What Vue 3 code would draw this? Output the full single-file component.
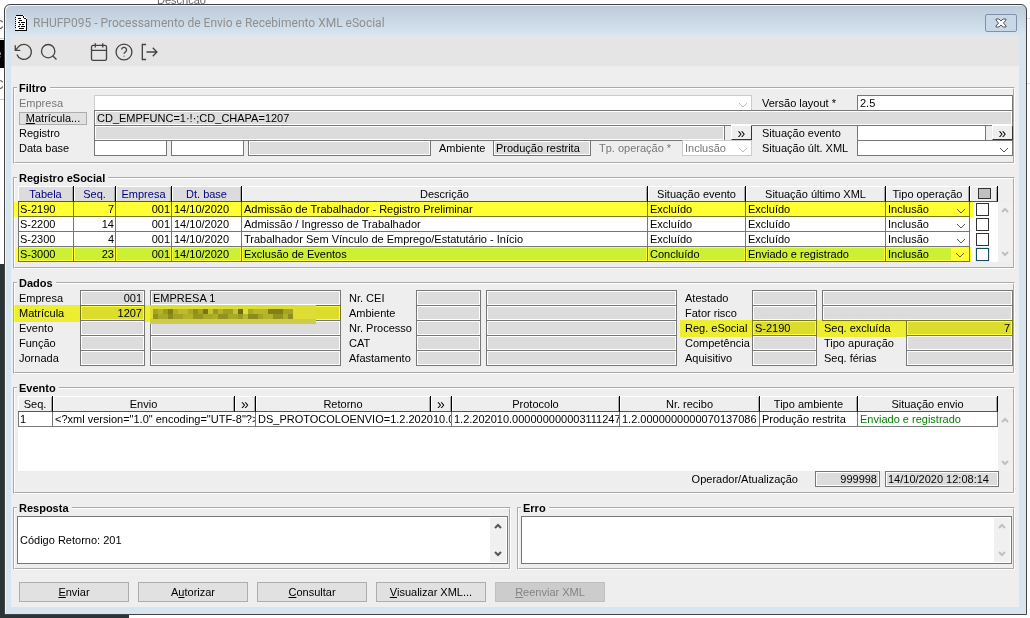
<script setup>
import { ref } from 'vue';

const registros = ref([
  { tabela: 'S-2190', seq: 7, descricao: 'Admissão de Trabalhador - Registro Preliminar', evento: 'Excluído', xml: 'Excluído', marca: 'marked' },
  { tabela: 'S-2200', seq: 14, descricao: 'Admissão / Ingresso de Trabalhador', evento: 'Excluído', xml: 'Excluído', marca: '' },
  { tabela: 'S-2300', seq: 4, descricao: 'Trabalhador Sem Vínculo de Emprego/Estatutário - Início', evento: 'Excluído', xml: 'Excluído', marca: '' },
  { tabela: 'S-3000', seq: 23, descricao: 'Exclusão de Eventos', evento: 'Concluído', xml: 'Enviado e registrado', marca: 'marked current' },
]);

const dados = [
  [
    { label: 'Empresa', codigo: '001', nome: 'EMPRESA 1', num: true },
    { label: 'Matrícula', codigo: '1207', nome: '', num: true, marca: true, oculto: true },
    { label: 'Evento', codigo: '', nome: '' },
    { label: 'Função', codigo: '', nome: '' },
    { label: 'Jornada', codigo: '', nome: '' },
  ],
  [
    { label: 'Nr. CEI', codigo: '', nome: '' },
    { label: 'Ambiente', codigo: '', nome: '' },
    { label: 'Nr. Processo', codigo: '', nome: '' },
    { label: 'CAT', codigo: '', nome: '' },
    { label: 'Afastamento', codigo: '', nome: '' },
  ],
  [
    { label: 'Atestado', codigo: '', nome: '' },
    { label: 'Fator risco', codigo: '', nome: '' },
    { label: 'Reg. eSocial', codigo: 'S-2190', nome: '7', label2: 'Seq. excluída', marca: true },
    { label: 'Competência', codigo: '', nome: '', label2: 'Tipo apuração' },
    { label: 'Aquisitivo', codigo: '', nome: '', label2: 'Seq. férias' },
  ],
];

// blocos do mosaico sobre o nome do funcionário: [x, linha, largura, cor]
const mosaico = [
  [3, 0, 5, '#a5a523'], [8, 0, 5, '#b3b32a'], [13, 0, 5, '#9c9c24'], [18, 0, 5, '#7f7f1c'], [23, 0, 5, '#b0b028'],
  [28, 0, 10, '#bcbc2e'], [38, 0, 5, '#a9a926'], [43, 0, 5, '#8f8f20'], [48, 0, 5, '#a5a523'], [53, 0, 5, '#77771a'],
  [58, 0, 5, '#c4c42e'], [63, 0, 5, '#999922'], [68, 0, 5, '#b3b32a'], [73, 0, 10, '#a0a024'], [83, 0, 5, '#c4c42e'],
  [88, 0, 5, '#6d6d14'], [98, 0, 5, '#a9a926'], [103, 0, 15, '#b7b72b'], [118, 0, 15, '#7f7f1c'], [133, 0, 10, '#a5a523'],
  [3, 1, 5, '#92921f'], [8, 1, 10, '#a9a926'], [18, 1, 5, '#8c8c1e'], [23, 1, 10, '#a3a324'], [33, 1, 10, '#b3b32a'],
  [43, 1, 10, '#96961f'], [53, 1, 10, '#a9a926'], [63, 1, 5, '#b0b028'], [68, 1, 10, '#92921f'], [78, 1, 10, '#a9a926'],
  [88, 1, 5, '#9c9c24'], [93, 1, 5, '#b7b72b'], [98, 1, 10, '#8c8c1e'], [108, 1, 5, '#a5a523'], [113, 1, 10, '#b3b32a'],
  [123, 1, 10, '#92921f'], [133, 1, 5, '#b0b028'], [138, 1, 5, '#8f8f20'],
];

const operacao = ref('Inclusão');
const resposta = ref('\nCódigo Retorno: 201');
const erro = ref('');
</script>

<template>
  <div class="desktop">
    <span class="behind behind-title">Descricao</span>
    <span class="behind behind-c1">C</span>
    <span class="behind behind-e">e</span>
    <span class="behind behind-c2">C</span>

    <main class="window">
      <header class="titlebar">
        <svg class="doc" viewBox="0 0 12 16" shape-rendering="crispEdges">
          <path d="M1 0h7l4 4v12H1z" fill="#fff" />
          <path d="M0 2h1M0 4h1M0 6h1M0 8h1M0 10h1M0 12h1" stroke="#000" />
          <path d="M1 0.500H8M8.500 1v2M9 3.500h2M11.500 4v12M0 15.500h12" fill="none" stroke="#000" />
          <path d="M3 3.500h3M4 5.500h3M3 7.500h2M6 7.500h4M4 9.500h2M7 9.500h2M3 11.500h2M6 11.500h4M4 13.500h5" stroke="#000" />
        </svg>
        <h1>RHUFP095 - Processamento de Envio e Recebimento XML eSocial</h1>
        <button class="close" aria-label="Fechar">
          <svg viewBox="0 0 12 10">
            <path d="M1 1h3l2 2 2-2h3v1L8.500 5 11 8v1H8L6 7 4 9H1V8l2.500-3L1 2z" fill="#fff" stroke="#54565c" />
          </svg>
        </button>
      </header>

      <nav class="toolbar">
        <button aria-label="Atualizar">
          <svg viewBox="0 0 24 24"><path d="M1.500 4v6h6M3.500 15a9 9 0 1 0 2-9.500L1.500 10" /></svg>
        </button>
        <button aria-label="Pesquisar">
          <svg viewBox="0 0 24 24"><circle cx="11" cy="11" r="8" /><path d="M21 21l-4.500-4.500" /></svg>
        </button>
        <button class="apart" aria-label="Calendário">
          <svg viewBox="0 0 24 24"><rect x="3" y="4" width="18" height="18" rx="2" /><path d="M7.500 1.500v5M16.500 1.500v5M3 10h18" /></svg>
        </button>
        <button aria-label="Ajuda">
          <svg viewBox="0 0 24 24"><circle cx="12" cy="12" r="9.500" /><path d="M9 9a3 3 0 0 1 6 1c0 2-3 2.500-3 4M12 16.500v1" /></svg>
        </button>
        <button aria-label="Sair">
          <svg viewBox="0 0 24 24"><path d="M8.500 21H4V3h4.500M16.500 17l5-5-5-5M21 12H9" /></svg>
        </button>
      </nav>

      <div class="content">
        <fieldset class="group">
          <legend>Filtro</legend>
          <div class="filter">
            <div class="line">
              <label class="lead off" for="empresa">Empresa</label>
              <span class="drop off grow">
                <select id="empresa" disabled><option></option></select>
                <svg viewBox="0 0 10 6"><path d="M1 1l4 4 4-4" /></svg>
              </span>
              <label class="side" for="layout">Versão layout *</label>
              <input id="layout" class="field wide" value="2.5" />
            </div>
            <div class="line">
              <span class="lead"><button class="btn small"><u>M</u>atrícula...</button></span>
              <input class="field ro grow" value="CD_EMPFUNC=1·!·;CD_CHAPA=1207" aria-label="Matrícula" readonly />
            </div>
            <div class="line">
              <label class="lead" for="registro">Registro</label>
              <input id="registro" class="field ro grow" readonly />
              <button class="more spaced">»</button>
              <label class="side" for="situacao">Situação evento</label>
              <span class="wide pair">
                <input id="situacao" class="field grow" />
                <button class="more spaced">»</button>
              </span>
            </div>
            <div class="line">
              <label class="lead" for="inicio">Data base</label>
              <span class="grow pair">
                <input id="inicio" class="field date" />
                <input class="field date" aria-label="Data final" />
                <input class="field ro grow" aria-label="Período" readonly />
                <label class="amb" for="ambiente">Ambiente</label>
                <input id="ambiente" class="field ro env" value="Produção restrita" readonly />
                <label class="oper off" for="operacao">Tp. operação *</label>
                <span class="drop off op">
                  <select id="operacao" v-model="operacao" disabled><option>Inclusão</option></select>
                  <svg viewBox="0 0 10 6"><path d="M1 1l4 4 4-4" /></svg>
                </span>
              </span>
              <label class="side" for="ultxml">Situação últ. XML</label>
              <span class="drop wide">
                <select id="ultxml"><option></option></select>
                <svg viewBox="0 0 10 6"><path d="M1 1l4 4 4-4" /></svg>
              </span>
            </div>
          </div>
        </fieldset>

        <fieldset class="group">
          <legend>Registro eSocial</legend>
          <div class="listing">
            <table>
              <colgroup>
                <col class="w56" /><col class="w42" /><col class="w56" /><col class="w70" /><col />
                <col class="w98" /><col class="w140" /><col class="w84" /><col class="w28" />
              </colgroup>
              <thead>
                <tr>
                  <th class="key">Tabela</th>
                  <th class="key">Seq.</th>
                  <th class="key">Empresa</th>
                  <th class="key">Dt. base</th>
                  <th>Descrição</th>
                  <th>Situação evento</th>
                  <th>Situação último XML</th>
                  <th>Tipo operação</th>
                  <th><input type="checkbox" class="tick all" aria-label="Todos" /></th>
                </tr>
              </thead>
              <tbody>
                <tr v-for="r in registros" :key="r.tabela" :class="r.marca">
                  <td>{{ r.tabela }}</td>
                  <td class="num">{{ r.seq }}</td>
                  <td class="num">001</td>
                  <td>14/10/2020</td>
                  <td>{{ r.descricao }}</td>
                  <td>{{ r.evento }}</td>
                  <td>{{ r.xml }}</td>
                  <td class="pick">
                    <span class="drop bare">
                      <select aria-label="Tipo operação"><option>Inclusão</option></select>
                      <svg viewBox="0 0 10 6"><path d="M1 1l4 4 4-4" /></svg>
                    </span>
                  </td>
                  <td class="check"><input type="checkbox" class="tick" :aria-label="r.tabela" /></td>
                </tr>
              </tbody>
            </table>
            <div class="scroll off">
              <svg viewBox="0 0 8 6"><path d="M1 5l3-3 3 3" /></svg>
              <svg viewBox="0 0 8 6"><path d="M1 1l3 3 3-3" /></svg>
            </div>
          </div>
        </fieldset>

        <fieldset class="group">
          <legend>Dados</legend>
          <div class="data">
            <div v-for="(bloco, b) in dados" :key="b" class="block">
              <div v-for="(d, i) in bloco" :key="d.label" class="line" :class="{ glow: d.marca }">
                <label class="tag" :for="`dado${b}${i}`">{{ d.label }}</label>
                <input :id="`dado${b}${i}`" class="field ro code" :class="{ num: d.num }" :value="d.codigo" readonly />
                <label v-if="d.label2" class="tag2" :for="`nome${b}${i}`">{{ d.label2 }}</label>
                <span class="name">
                  <input :id="`nome${b}${i}`" class="field ro" :class="{ num: d.label2 }" :value="d.nome" :aria-label="d.label" readonly />
                  <svg v-if="d.oculto" class="mosaic" viewBox="0 0 166 20">
                    <rect width="166" height="15" fill="#dddd33" />
                    <rect y="14" width="166" height="5" fill="#cccc4d" />
                    <rect v-for="(m, k) in mosaico" :key="k" :x="m[0]" :y="4 + m[1] * 5" :width="m[2]" height="5" :fill="m[3]" />
                  </svg>
                </span>
              </div>
            </div>
          </div>
        </fieldset>

        <fieldset class="group">
          <legend>Evento</legend>
          <div class="listing events">
            <div class="sheet">
              <table>
                <colgroup>
                  <col class="w35" /><col /><col class="w21" /><col class="w175" /><col class="w21" />
                  <col class="w168" /><col class="w140" /><col class="w98" /><col class="w140" />
                </colgroup>
                <thead>
                  <tr>
                    <th>Seq.</th>
                    <th>Envio</th>
                    <th><button class="more flat">»</button></th>
                    <th>Retorno</th>
                    <th><button class="more flat">»</button></th>
                    <th>Protocolo</th>
                    <th>Nr. recibo</th>
                    <th>Tipo ambiente</th>
                    <th>Situação envio</th>
                  </tr>
                </thead>
                <tbody>
                  <tr>
                    <td>1</td>
                    <td colspan="2">&lt;?xml version="1.0" encoding="UTF-8"?&gt;</td>
                    <td colspan="2">DS_PROTOCOLOENVIO=1.2.202010.000</td>
                    <td>1.2.202010.0000000000031112470</td>
                    <td>1.2.0000000000070137086</td>
                    <td>Produção restrita</td>
                    <td class="sent">Enviado e registrado</td>
                  </tr>
                </tbody>
              </table>
            </div>
            <div class="scroll off">
              <svg viewBox="0 0 8 6"><path d="M1 5l3-3 3 3" /></svg>
              <svg viewBox="0 0 8 6"><path d="M1 1l3 3 3-3" /></svg>
            </div>
          </div>
          <div class="audit">
            <label for="operador">Operador/Atualização</label>
            <input id="operador" class="field ro num who" value="999998" readonly />
            <input class="field ro when" value="14/10/2020 12:08:14" aria-label="Atualização" readonly />
          </div>
        </fieldset>

        <div class="messages">
          <fieldset class="group">
            <legend>Resposta</legend>
            <div class="memo">
              <textarea v-model="resposta" aria-label="Resposta"></textarea>
              <div class="scroll">
                <svg viewBox="0 0 8 6"><path d="M1 5l3-3 3 3" /></svg>
                <svg viewBox="0 0 8 6"><path d="M1 1l3 3 3-3" /></svg>
              </div>
            </div>
          </fieldset>
          <fieldset class="group">
            <legend>Erro</legend>
            <div class="memo">
              <textarea v-model="erro" aria-label="Erro"></textarea>
              <div class="scroll off">
                <svg viewBox="0 0 8 6"><path d="M1 5l3-3 3 3" /></svg>
                <svg viewBox="0 0 8 6"><path d="M1 1l3 3 3-3" /></svg>
              </div>
            </div>
          </fieldset>
        </div>

        <footer class="actions">
          <button class="btn"><u>E</u>nviar</button>
          <button class="btn">A<u>u</u>torizar</button>
          <button class="btn"><u>C</u>onsultar</button>
          <button class="btn"><u>V</u>isualizar XML...</button>
          <button class="btn" disabled><u>R</u>eenviar XML</button>
        </footer>
      </div>
    </main>
  </div>
</template>

<style>
body {
  margin: 0;
  background: #fff;
}
</style>

<style scoped>
* {
  box-sizing: border-box;
}

.desktop {
  position: relative;
  overflow: hidden;
  padding: 4px 3px 4px 4px;
  font-family: "Liberation Sans", Arial, sans-serif;
  font-size: 11px;
  line-height: 14px;
  color: #000;
  background:
    linear-gradient(#000, #000) 0 40px / 5px 28px no-repeat,
    linear-gradient(#c8c8c8, #c8c8c8) 0 38px / 5px 1px no-repeat,
    linear-gradient(#c8c8c8, #c8c8c8) 0 99px / 5px 1px no-repeat,
    linear-gradient(#2b3436, #2b3436) 0 264px / 5px 100% no-repeat,
    linear-gradient(#2b3436, #2b3436) 0 100% / 129px 5px no-repeat,
    linear-gradient(#ddd, #ddd) 100% 18px / 4px 1px no-repeat,
    linear-gradient(#ddd, #ddd) 100% 83px / 4px 1px no-repeat,
    #fff;
}

.behind {
  position: absolute;
  left: -5px;
  font-size: 12px;
  color: #666;
}

.behind-title {
  top: -7px;
  left: 157px;
  font-size: 11px;
}

.behind-c1 {
  top: 18px;
}

.behind-e {
  top: 47px;
  color: #888;
}

.behind-c2 {
  top: 78px;
}

.window {
  position: relative;
  border: 1px solid #444;
  border-radius: 6px 6px 0 0;
  padding: 0 7px 7px 6px;
  background: linear-gradient(#bccad9, #d7e5f1 30px);
  box-shadow: inset 1px 1px 0 #eef4fa;
}

.titlebar {
  display: flex;
  align-items: center;
  height: 30px;
  padding: 0 2px 0 4px;
}

.doc {
  width: 12px;
  height: 16px;
  margin-top: 6px;
}

h1 {
  flex: 1;
  margin: 6px 0 0 6px;
  font-family: Roboto, sans-serif;
  font-size: 12px;
  font-weight: 400;
  color: #8f8f8f;
}

button {
  padding: 0;
  font: inherit;
  color: inherit;
}

.close {
  display: flex;
  align-items: center;
  justify-content: center;
  width: 32px;
  height: 18px;
  margin-top: 6px;
  border: 1px solid #8091b0;
  border-radius: 2px;
  background: #c9d8e7;
}

.close svg {
  width: 12px;
  height: 10px;
}

.toolbar {
  display: flex;
  align-items: center;
  gap: 5px;
  height: 31px;
  padding: 2px 0 0 3px;
  background: #e5e5e5;
}

.toolbar button {
  display: flex;
  border: 0;
  background: none;
}

.toolbar .apart {
  margin-left: 25px;
}

.toolbar svg {
  width: 20px;
  height: 20px;
  fill: none;
  stroke: #444;
  stroke-width: 1.6;
}

.content {
  display: flex;
  flex-direction: column;
  gap: 8px;
  padding: 16px 4px 5px 2px;
  background: #eee;
}

.group {
  min-width: 0;
  margin: 0;
  padding: 0;
  border: 2px groove #fff;
}

legend {
  height: 12px;
  margin-left: 2px;
  padding: 0 3px 0 2px;
  font-weight: 700;
  line-height: 12px;
}

.filter {
  padding: 1px 0 7px 4px;
}

.line {
  position: relative;
  display: flex;
  align-items: flex-start;
  height: 15px;
  line-height: 16px;
}

.grow {
  flex: 1;
  min-width: 0;
}

.lead {
  width: 75px;
}

.side {
  width: 105px;
  padding-left: 10px;
}

.wide {
  width: 156px;
}

label.off {
  color: #777;
}

.pair {
  display: flex;
  align-items: flex-start;
}

.field {
  height: 16px;
  padding: 0 2px;
  border: 1px solid #777;
  border-radius: 0;
  background: #fff;
  font: inherit;
  color: inherit;
  outline: none;
}

.ro {
  background: #dcdcdc;
  box-shadow: inset 1px 1px 0 #fff, inset -1px -1px 0 #fff;
}

.num {
  text-align: right;
}

.date {
  width: 73px;
  margin-right: 4px;
}

.amb {
  width: 62px;
  padding-left: 8px;
}

.env {
  width: 98px;
}

.oper {
  width: 91px;
  padding-left: 8px;
}

.op {
  width: 70px;
}

.more {
  width: 21px;
  height: 15px;
  border: 1px solid;
  border-color: #fff #333 #333 #fff;
  background: #eee;
  font-size: 14px;
  line-height: 10px;
}

.spaced {
  margin-left: 6px;
}

.flat {
  display: block;
  width: 100%;
  height: 14px;
  border: 0;
  background: none;
}

.drop {
  display: grid;
  height: 16px;
  align-items: center;
  border: 1px solid #777;
  background: #fff;
  color: #000;
}

.drop.off {
  border-color: #ccc;
}

.drop.bare {
  height: 14px;
  border: 0;
  background: none;
}

.drop select {
  grid-area: 1 / 1;
  width: 100%;
  height: 14px;
  padding: 0 0 0 2px;
  border: 0;
  background: none;
  appearance: none;
  font: inherit;
  line-height: 14px;
  color: inherit;
  opacity: 1;
}

.drop.off select {
  color: #777;
}

.drop svg {
  grid-area: 1 / 1;
  justify-self: end;
  width: 10px;
  height: 6px;
  margin: 4px 3px 0 0;
  fill: none;
  stroke: #555;
  pointer-events: none;
}

.drop.off svg {
  stroke: #bbb;
}

.btn {
  width: 110px;
  height: 20px;
  border: 1px solid #adadad;
  background: #e1e1e1;
}

.btn:disabled {
  border-color: #bfbfbf;
  background: #ccc;
  color: #838383;
}

.btn.small {
  display: block;
  width: 68px;
  height: 13px;
  margin-top: 2px;
  line-height: 11px;
}

.listing {
  display: flex;
  padding: 2px 1px 5px 3px;
}

table {
  flex: 1;
  width: 100%;
  min-width: 0;
  table-layout: fixed;
  border-collapse: separate;
  border-spacing: 0;
}

.w21 {
  width: 21px;
}

.w28 {
  width: 28px;
}

.w35 {
  width: 35px;
}

.w42 {
  width: 42px;
}

.w56 {
  width: 56px;
}

.w70 {
  width: 70px;
}

.w84 {
  width: 84px;
}

.w98 {
  width: 98px;
}

.w140 {
  width: 140px;
}

.w168 {
  width: 168px;
}

.w175 {
  width: 175px;
}

th {
  height: 16px;
  padding: 0;
  border-right: 1px solid #000;
  border-bottom: 1px solid #555;
  box-shadow: inset 1px 1px 0 #fff, inset -1px 0 0 #aaa;
  background: #eee;
  font-weight: 400;
}

th.key {
  background: #dcdcdc;
  color: #000080;
}

td {
  height: 15px;
  padding: 0 1px 0 2px;
  border-right: 1px solid #777;
  border-bottom: 1px solid #777;
  background: #fff;
  overflow: hidden;
  white-space: nowrap;
}

td:first-child {
  padding-left: 1px;
  border-left: 1px solid #777;
}

td.pick {
  padding: 0;
}

td.check {
  padding: 0 0 0 6px;
  border: 0;
}

.sent {
  color: #008000;
}

.tick {
  display: block;
  width: 13px;
  height: 13px;
  margin: 0;
  border: 1px solid #333;
  background: #fff;
  appearance: none;
}

.tick.all {
  width: 13px;
  height: 11px;
  margin-left: 8px;
  background: #c0c0c0;
}

/* marca-texto amarelo sobre as linhas em destaque */
.marked td {
  border-color: #777722;
  background: #ffff33;
}

.marked td:first-child {
  box-shadow: -4px 0 0 #ffff33;
}

.marked td.check {
  background: linear-gradient(90deg, #ffff33 3px, #fff 3px);
}

.current td {
  background: #ccf033;
  box-shadow: inset 1px 1px 0 #ffff33, inset -1px -1px 0 #ffff33;
}

.current td:first-child {
  box-shadow: -3px 0 0 #ffff33, inset 1px 1px 0 #ffff33, inset -1px -1px 0 #ffff33;
}

.current td.check {
  background: linear-gradient(90deg, #ffff33 1px, #fff 1px);
  box-shadow: none;
}

.current .tick {
  border-color: #1c4a66;
  box-shadow: 0 0 0 1px #ccf0ff;
}

.current .pick .drop svg {
  padding: 5px 4px 3px;
  width: 18px;
  height: 14px;
  margin: 0;
  background: #ffff33;
}

.glow::after {
  content: "";
  position: absolute;
  inset: 0 0 -2px -5px;
  background: #ffff33;
  mix-blend-mode: multiply;
  pointer-events: none;
}

.scroll {
  display: flex;
  flex-direction: column;
  align-items: center;
  justify-content: space-between;
  width: 14px;
  margin-top: 16px;
  padding: 5px 0;
  background: #f0f0f0;
}

.scroll svg {
  width: 8px;
  height: 6px;
  fill: none;
  stroke: #555;
  stroke-width: 2;
}

.scroll.off svg {
  stroke: #c0c0c0;
}

.data {
  display: grid;
  grid-template-columns: 322fr 328fr 328fr;
  gap: 8px;
  padding: 1px 0 7px 4px;
}

.tag {
  width: 67px;
}

.block:first-child .tag {
  width: 61px;
}

.code {
  width: 65px;
  margin-right: 5px;
}

.tag2 {
  width: 84px;
  padding-left: 2px;
}

.name {
  position: relative;
  display: flex;
  flex: 1;
  min-width: 0;
}

.name .field {
  width: 100%;
}

.mosaic {
  position: absolute;
  top: 0;
  left: 0;
  width: 166px;
  height: 20px;
  z-index: 1;
}

.events {
  padding-bottom: 0;
}

.sheet {
  flex: 1;
  min-width: 0;
  height: 75px;
  background: #fff;
}

.audit {
  display: flex;
  align-items: center;
  justify-content: flex-end;
  gap: 5px;
  padding: 0 14px 5px 0;
}

.audit label {
  margin-right: 12px;
}

.who {
  width: 65px;
}

.when {
  width: 114px;
}

.messages {
  display: grid;
  grid-template-columns: 1fr 1fr;
  gap: 6px;
}

.memo {
  display: flex;
  height: 48px;
  margin: 2px 1px 4px 2px;
  padding: 1px;
  border: 1px solid #777;
  background: #fff;
}

.memo textarea {
  flex: 1;
  min-width: 0;
  padding: 1px;
  border: 0;
  background: none;
  font: inherit;
  line-height: 14px;
  color: inherit;
  resize: none;
  outline: none;
  overflow: hidden;
}

.memo .scroll {
  width: 16px;
  margin: 0;
}

.actions {
  display: flex;
  gap: 9px;
  padding: 4px 0 0 6px;
}
</style>
